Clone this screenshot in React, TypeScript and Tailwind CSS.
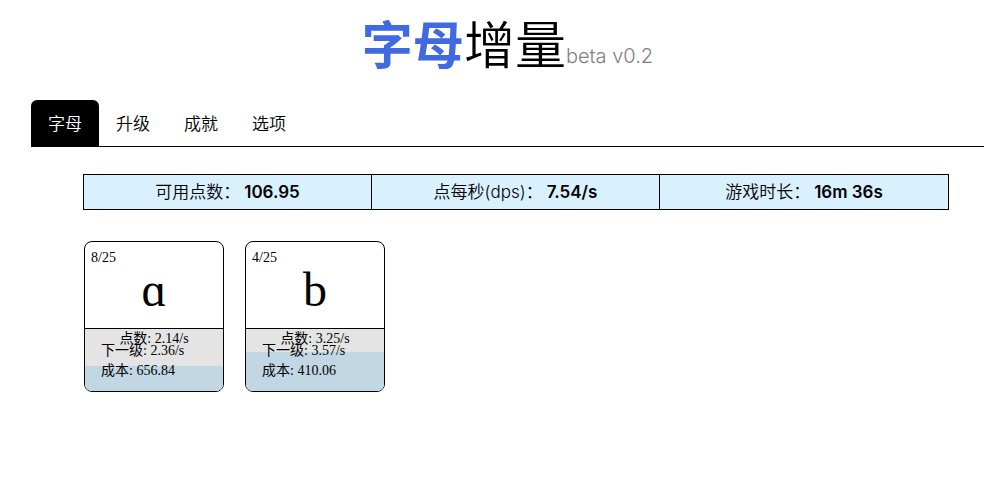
import { useState } from "react";

const tabs = ["字母", "升级", "成就", "选项"];

const stats = [
  { label: "可用点数：", value: "106.95" },
  { label: "点每秒(dps)：", value: "7.54/s" },
  { label: "游戏时长：", value: "16m 36s" },
];

const letters = [
  { glyph: "ɑ", level: "8/25", rate: "2.14/s", next: "2.36/s", cost: "656.84", progress: 40 },
  { glyph: "b", level: "4/25", rate: "3.25/s", next: "3.57/s", cost: "410.06", progress: 63 },
];

type Letter = (typeof letters)[number];

function LetterCard({ letter }: { letter: Letter }) {
  return (
    <article className="flex w-[140px] flex-col overflow-hidden rounded-lg border border-black font-['Liberation_Serif','Noto_Sans_CJK_SC',serif] text-sm text-black">
      <div className="flex h-[86px] flex-col px-1.5 pt-2">
        <span className="leading-4">{letter.level}</span>
        <span className="text-center text-5xl leading-[48px]">{letter.glyph}</span>
      </div>
      <button
        type="button"
        className="relative flex h-[63px] flex-col border-t border-black bg-[#e4e4e4] text-left"
      >
        <span
          className="absolute inset-x-0 bottom-0 bg-[#c1d7e4]"
          style={{ height: `${letter.progress}%` }}
        />
        <span className="relative w-full pt-1 text-center leading-3">点数: {letter.rate}</span>
        <span className="relative pl-4 leading-3">下一级: {letter.next}</span>
        <span className="relative pt-2 pl-4 leading-3">成本: {letter.cost}</span>
      </button>
    </article>
  );
}

export default function App() {
  const [active, setActive] = useState(0);

  return (
    <div className="min-h-screen bg-white pt-3.5 pr-4 pl-[31px] font-['Inter','Noto_Sans_CJK_SC',sans-serif] text-[17px] text-black">
      <header className="flex items-end justify-center">
        <h1 className="text-[51px] leading-[64px] font-[350]">
          <span className="font-bold text-[#4169e1]">字母</span>增量
        </h1>
        <span className="pb-2 text-xl font-light text-[#808080]">beta v0.2</span>
      </header>

      <nav className="mt-[22px] flex border-b border-black" role="tablist">
        {tabs.map((tab, index) => (
          <button
            key={tab}
            type="button"
            role="tab"
            aria-selected={index === active}
            onClick={() => setActive(index)}
            className={
              index === active
                ? "h-[46px] rounded-t-md bg-black px-[17px] pt-1 font-[350] text-white"
                : "h-[46px] rounded-t-md px-[17px] pt-1 font-[350] text-black"
            }
          >
            {tab}
          </button>
        ))}
      </nav>

      <main className="mt-[27px] mr-[35px] ml-[52px]">
        <dl className="grid grid-cols-3 divide-x divide-black border border-black bg-[#d9f0ff]">
          {stats.map((stat) => (
            <div key={stat.label} className="flex h-[34px] items-center justify-center pt-0.5">
              <dt className="font-[350]">{stat.label}</dt>
              <dd className="ml-1 font-semibold">{stat.value}</dd>
            </div>
          ))}
        </dl>

        <section className="mt-[31px] ml-px flex flex-wrap gap-[21px]">
          {letters.map((letter) => (
            <LetterCard key={letter.glyph} letter={letter} />
          ))}
        </section>
      </main>
    </div>
  );
}
